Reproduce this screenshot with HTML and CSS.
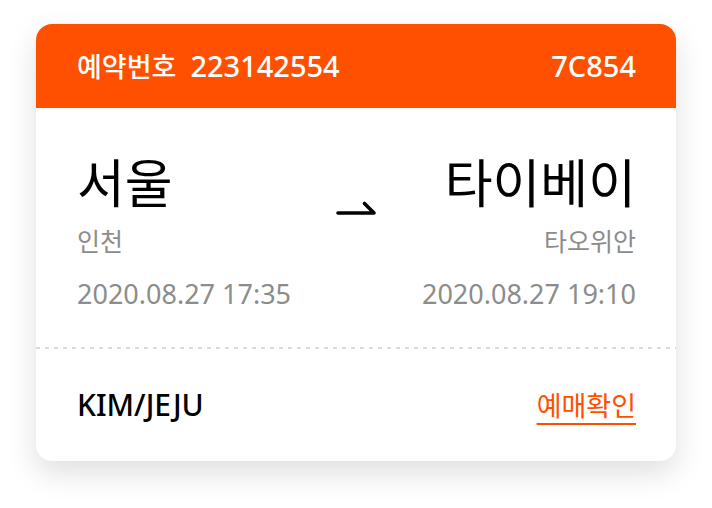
FILE: index.html
```html
<!DOCTYPE html>
<html lang="ko">
<head>
<meta charset="utf-8">
<link rel="stylesheet" href="styles.css">
</head>
<body>
<div class="card">
  <div class="card-head">
    <div class="booking"><span class="label">예약번호</span><span class="num">223142554</span></div>
    <div class="code">7C854</div>
  </div>
  <div class="route">
    <div class="place">
      <div class="city">서울</div>
      <div class="airport">인천</div>
      <div class="time">2020.08.27 17:35</div>
    </div>
    <div class="arrow">
      <svg width="42" height="18" viewBox="0 0 42 18"><path d="M2 14 H38 L28.5 4.5" fill="none" stroke="#000" stroke-width="3.6" stroke-linecap="round" stroke-linejoin="round"/></svg>
    </div>
    <div class="place right">
      <div class="city">타이베이</div>
      <div class="airport">타오위안</div>
      <div class="time">2020.08.27 19:10</div>
    </div>
  </div>
  <div class="divider"></div>
  <div class="card-foot">
    <div class="name">KIM/JEJU</div>
    <a class="confirm">예매확인</a>
  </div>
</div>
</body>
</html>
```
FILE: styles.css
```css
html, body { margin: 0; padding: 0; background: #fff; }
html { min-height: 100%; }
body {
  font-family: "Noto Sans", "Noto Sans CJK KR", sans-serif;
  padding: 24px 36px 48px 36px;
}
.card {
  width: 640px;
  border-radius: 16px;
  background: #fff;
  box-shadow: 0 12px 30px rgba(0,0,0,0.13);
  overflow: hidden;
}
.card-head {
  height: 84px;
  background: #ff5000;
  color: #fff;
  display: flex;
  justify-content: space-between;
  align-items: center;
  padding: 0 40px 2px 41px;
  box-sizing: border-box;
  font-size: 29px;
  font-weight: 500;
}
.booking { display: flex; align-items: baseline; gap: 14px; }
.label { font-size: 27px; }
.route {
  display: flex;
  justify-content: space-between;
  align-items: flex-start;
  padding: 43px 40px 0 41px;
  height: 239px;
  box-sizing: border-box;
}
.divider {
  height: 2px;
  background-image: linear-gradient(to right, #dcdcdc 45%, transparent 45%);
  background-size: 9px 2px;
}
.place { display: flex; flex-direction: column; }
.place.right { align-items: flex-end; }
.city { font-size: 52px; line-height: 64px; color: #000; }
.airport { font-size: 25px; line-height: 32px; color: #8c8c8c; margin-top: 10px; }
.time { font-size: 27px; line-height: 32px; color: #8c8c8c; margin-top: 21px; }
.arrow { padding-top: 48px; }
.arrow svg { display: block; }
.card-foot {
  height: 112px;
  display: flex;
  justify-content: space-between;
  align-items: center;
  padding: 0 40px 2px 41px;
  box-sizing: border-box;
}
.name { font-size: 30px; font-weight: 500; color: #000; }
.confirm {
  font-size: 27px;
  color: #ff5000;
  text-decoration: underline;
  text-decoration-thickness: 2px;
  text-underline-offset: 7px;
}
```
